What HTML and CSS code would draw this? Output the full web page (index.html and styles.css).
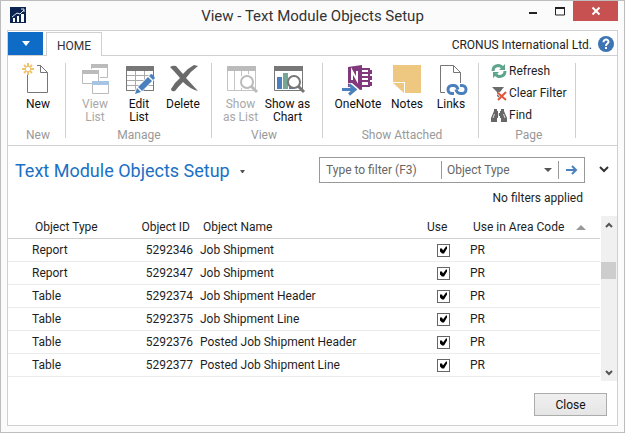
FILE: index.html
```html
<!DOCTYPE html>
<html lang="en">
<head>
<meta charset="utf-8">
<title>View - Text Module Objects Setup</title>
<link rel="stylesheet" href="styles.css">
</head>
<body>
<div class="window">
  <header class="titlebar">
    <svg class="app-icon" width="16" height="16" viewBox="0 0 16 16" aria-hidden="true"><rect width="16" height="16" fill="#0a2350"/><path d="M3 11h2v4H3zM7 9h2v6H7zM11 7h3v8h-3z" fill="#fff"/><path d="M2 10l5-4 3 1 4-4M11 2h3v3" fill="none" stroke="#dfe6f0"/></svg>
    <h1 class="window-title">View - Text Module Objects Setup</h1>
    <div class="window-controls">
      <button class="caption" aria-label="Minimize"><svg width="10" height="10"><rect x="1" y="6" width="8" height="2" fill="#222"/></svg></button>
      <button class="caption" aria-label="Maximize"><svg width="10" height="10"><path d="M.5 1v8h9V1" fill="none" stroke="#222"/><path d="M0 1h10v2H0z" fill="#222"/></svg></button>
      <button class="caption caption-close" aria-label="Close window"><svg width="10" height="10"><path d="M1.500 1.500l7 7M8.500 1.500l-7 7" stroke="#fff" stroke-width="2"/></svg></button>
    </div>
  </header>

  <main class="frame">
    <nav class="tabs">
      <button class="app-menu" aria-label="Application menu"><svg width="8" height="5"><path d="M0 0h8L4 5z" fill="#fff"/></svg></button>
      <a class="tab" href="#home">HOME</a>
      <span class="company">CRONUS International Ltd.</span>
      <button class="help" aria-label="Help"><svg width="16" height="16"><circle cx="8" cy="8" r="8" fill="#3c74b4"/><path d="M5.500 6.200C5.500 2.500 10.800 3 10.500 5.900C10.300 7.600 8 7.700 8 10" fill="none" stroke="#fff" stroke-width="2"/><rect x="7" y="11" width="2" height="2" fill="#fff"/></svg></button>
    </nav>

    <div class="ribbon" id="home">
      <section class="group group-new">
        <div class="tools">
          <button class="tool"><svg width="32" height="32"><path d="M5.500 12v17.500h20V9.500l-7-7H15M18.500 2.500v7h7" fill="none" stroke="#777"/><path d="M6 0v4M6 8v4M0 6h4M8 6h4M2 2l2.500 2.500M7.500 7.500L10 10M10 2L7.500 4.500M4.500 7.500L2 10" stroke="#eec36d" stroke-width="2"/></svg><span>New</span></button>
        </div>
        <h2 class="group-name">New</h2>
      </section>
      <section class="group group-manage">
        <div class="tools">
          <button class="tool" disabled><svg width="32" height="32"><path d="M12.500 6V1.500h16v13H21M3.500 7.500h16v13h-16z" fill="#fff" stroke="#bbb"/><path d="M12 1h17v4H12zM3 7h17v4H3z" fill="#bbb"/><path d="M13.500 18.500h16v12h-16z" fill="#fff" stroke="#bbb"/><path d="M13 18h17v4H13z" fill="#a7c5e2"/></svg><span>View<br>List</span></button>
          <button class="tool"><svg width="32" height="32"><path d="M3.500 6v21.500h27V6M3 12.500h28M3 17.500h28M3 22.500h28M12.500 8v19M21.500 8v19" fill="none" stroke="#aaa"/><path d="M3.500 6v21.500h27V6" fill="none" stroke="#777"/><path d="M3 3h28v5H3z" fill="#777"/><path d="M11 32l2-7 14-14 5 5-14 14z" fill="#fff"/><path d="M12 31l2-6 4 4zM15 24l10-10 4 4-10 10zM26 13l2-2q2 0 4 4l-2 2z" fill="#4a80bd"/></svg><span>Edit<br>List</span></button>
          <button class="tool"><svg width="32" height="32"><path d="M3 4q3-2 6-1l7 8q5-6 11-9l4 1q-7 5-12 12l12 13q-8-2-15-9-5 5-8 9-4 1-4-2 3-6 9-11Q8 9 3 4z" fill="#6b6b6b"/></svg><span>Delete</span></button>
        </div>
        <h2 class="group-name">Manage</h2>
      </section>
      <section class="group group-view">
        <div class="tools">
          <button class="tool tool-wide" disabled><svg width="32" height="32"><path d="M2.500 4v23.500h28V4M9.500 8v19M16.500 8v19M23.500 8v19" fill="none" stroke="#c4c4c4"/><path d="M2 3h29v5H2z" fill="#bbb"/><circle cx="22" cy="19" r="6" fill="#fff" stroke="#fff" stroke-width="4"/><circle cx="22" cy="19" r="6" fill="#fff" stroke="#bbb" stroke-width="2"/><path d="M26 23l6 6" stroke="#bbb" stroke-width="3"/></svg><span>Show<br>as List</span></button>
          <button class="tool tool-wide"><svg width="32" height="32"><path d="M2.500 4v23.500h28V4" fill="none" stroke="#777"/><path d="M2 3h29v5H2z" fill="#777"/><path d="M5 14h5v12H5z" fill="#4a80bd"/><path d="M11 10h5v16h-5z" fill="#74a894"/><path d="M17 14h5v12h-5z" fill="#4a80bd"/><circle cx="22" cy="19" r="6" fill="#fff" stroke="#777" stroke-width="2"/><path d="M26 23l6 6" stroke="#777" stroke-width="3"/></svg><span>Show as<br>Chart</span></button>
        </div>
        <h2 class="group-name">View</h2>
      </section>
      <section class="group group-attached">
        <div class="tools">
          <button class="tool tool-onenote"><svg width="32" height="32"><path d="M20 5h8v19h-8z" fill="#81397b"/><path d="M28 7h2v4h-2zM28 13h2v4h-2zM28 19h2v4h-2z" fill="#81397b"/><path d="M20 7h6v2h-6zM20 11h6v2h-6zM20 15h6v2h-6zM20 19h6v3h-6z" fill="#fff"/><path d="M6 4l14-2v25L6 25z" fill="#81397b"/><path d="M10 17V8l5 9V8" fill="none" stroke="#fff" stroke-width="2"/><path d="M0 24h10l-4-4h4l7 6v5H0z" fill="#fff"/><path d="M0 26.500h13M7 21.500l6 5-6 5" fill="none" stroke="#4a80bd" stroke-width="3"/></svg><span>OneNote</span></button>
          <button class="tool"><svg width="32" height="32"><path d="M2 2h28v28H14V19H2z" fill="#eec880"/><path d="M2 20h11v10z" fill="#eec880"/></svg><span>Notes</span></button>
          <button class="tool"><svg width="32" height="32"><path d="M10 29.500H5.500v-27h13l7 7V20M18.500 2.500v7h7" fill="none" stroke="#777"/><g fill="none" stroke-width="3" stroke="#4a80bd"><path d="M19 30.500h-2a4 4 0 0 1 0-8h2q3 0 4 4"/><path d="M25 22.500h2a4 4 0 0 1 0 8h-2q-3 0-4-4"/></g></svg><span>Links</span></button>
        </div>
        <h2 class="group-name">Show Attached</h2>
      </section>
      <section class="group group-page">
        <div class="tools tools-stacked">
          <button class="mini"><svg width="16" height="16"><path d="M2 8q0-5 5-5.500 3 0 4 2M14 8q0 5-5 5.500-3 0-4-2" fill="none" stroke="#5fa58b" stroke-width="3"/><path d="M14 1v6H8zM2 15V9h6z" fill="#5fa58b"/></svg><span>Refresh</span></button>
          <button class="mini"><svg width="16" height="16"><path d="M1 2h12L9 7v7l-3-3V7z" fill="#6b6b6b"/><path d="M7 8l8 7M15 7l-8 8" stroke="#fff" stroke-width="3"/><path d="M7 8l8 7M15 7l-8 8" stroke="#e2563b" stroke-width="2"/></svg><span>Clear Filter</span></button>
          <button class="mini"><svg width="16" height="16"><path d="M3 2h3v2h1v2h2V4h1V2h3v2l3 7v4h-6v-4H9V9H7v2H6v4H0v-4l3-7z" fill="#666"/><path d="M3.500 7L2 11M12.500 7L14 11M7.500 6v3" stroke="#ddd"/></svg><span>Find</span></button>
        </div>
        <h2 class="group-name">Page</h2>
      </section>
    </div>

    <div class="page-head">
      <button class="page-title">Text Module Objects Setup<svg width="5" height="3"><path d="M0 0h5L3 3H2z" fill="#555"/></svg></button>
      <form class="filter">
        <input class="filter-text" type="text" placeholder="Type to filter (F3)" aria-label="Type to filter">
        <div class="filter-field">
          <select aria-label="Filter field"><option>Object Type</option></select>
          <svg class="field-arrow" width="8" height="4"><path d="M0 0h8L4 4z" fill="#555"/></svg>
        </div>
        <button class="go" type="button" aria-label="Apply filter"><svg width="12" height="10"><path d="M0 5h10M6 1l4 4-4 4" fill="none" stroke="#4a80bd" stroke-width="2"/></svg></button>
      </form>
      <button class="expand" aria-label="Expand filters"><svg width="10" height="7"><path d="M1 1l4 4 4-4" fill="none" stroke="#333" stroke-width="2"/></svg></button>
    </div>
    <p class="filter-state">No filters applied</p>

    <div class="list">
      <table class="grid">
        <colgroup><col class="col-type"><col class="col-id"><col><col class="col-use"><col class="col-area"></colgroup>
        <thead><tr><th>Object Type</th><th class="num">Object ID</th><th>Object Name</th><th>Use</th><th><div class="sorted"><span>Use in Area Code</span><svg width="10" height="5"><path d="M0 5h10L5 0z" fill="#999"/></svg></div></th></tr></thead>
        <tbody>
          <tr><td>Report</td><td class="num">5292346</td><td>Job Shipment</td><td class="use"><input type="checkbox" checked aria-label="Use 5292346"></td><td>PR</td></tr>
          <tr><td>Report</td><td class="num">5292347</td><td>Job Shipment</td><td class="use"><input type="checkbox" checked aria-label="Use 5292347"></td><td>PR</td></tr>
          <tr><td>Table</td><td class="num">5292374</td><td>Job Shipment Header</td><td class="use"><input type="checkbox" checked aria-label="Use 5292374"></td><td>PR</td></tr>
          <tr><td>Table</td><td class="num">5292375</td><td>Job Shipment Line</td><td class="use"><input type="checkbox" checked aria-label="Use 5292375"></td><td>PR</td></tr>
          <tr><td>Table</td><td class="num">5292376</td><td>Posted Job Shipment Header</td><td class="use"><input type="checkbox" checked aria-label="Use 5292376"></td><td>PR</td></tr>
          <tr><td>Table</td><td class="num">5292377</td><td>Posted Job Shipment Line</td><td class="use"><input type="checkbox" checked aria-label="Use 5292377"></td><td>PR</td></tr>
        </tbody>
      </table>
      <div class="scrollbar">
        <button class="scroll-step" aria-label="Scroll up"><svg width="8" height="6"><path d="M1 5l3-3 3 3" fill="none" stroke="#555" stroke-width="2"/></svg></button>
        <div class="track"><div class="thumb"></div></div>
        <button class="scroll-step" aria-label="Scroll down"><svg width="8" height="6"><path d="M1 1l3 3 3-3" fill="none" stroke="#555" stroke-width="2"/></svg></button>
      </div>
    </div>

    <footer class="actions"><button class="close">Close</button></footer>
  </main>
</div>
</body>
</html>
```
FILE: styles.css
```css
* { box-sizing: border-box; }
body {
  margin: 0;
  font: 12px/14px "Segoe UI", Roboto, "Open Sans", sans-serif;
  color: #1e1e1e;
}
button, input, select { font: inherit; color: inherit; margin: 0; }
button { padding: 0; border: 0; background: none; }
svg { display: block; flex: none; overflow: visible; }
h1, h2, p { margin: 0; font-weight: 400; }

.window {
  display: flex;
  flex-direction: column;
  min-height: 100vh;
  padding: 0 6px 6px;
  border: 1px solid #bdbdbd;
  background: #fbfbfb;
}
.titlebar { display: grid; grid-template-columns: 1fr auto 1fr; height: 29px; }
.app-icon { margin: 6px 0 0 3px; }
.window-title { font-size: 15px; line-height: 30px; color: #333; }
.window-controls { display: flex; justify-content: flex-end; height: 20px; }
.caption { display: grid; place-items: center; width: 27px; }
.caption-close { width: 45px; background: #c75050; }

.frame {
  flex: 1;
  display: flex;
  flex-direction: column;
  border: 1px solid #d0d0d0;
  background: #fff;
}
.tabs { display: flex; align-items: center; height: 25px; padding-right: 3px; border-bottom: 1px solid #d0d0d0; }
.app-menu { display: grid; place-items: center; align-self: flex-end; width: 35px; height: 23px; background: #0f6cc6; }
.tab {
  align-self: flex-end;
  height: 24px;
  margin: 0 auto -1px 3px;
  padding: 0 10px;
  border: 1px solid #d0d0d0;
  border-bottom: 0;
  background: #fff;
  line-height: 26px;
  color: #333;
  text-decoration: none;
}
.company { margin: 4px 6px 0 0; }
.help { margin-top: 2px; }

.ribbon { display: flex; padding: 7px 0; border-bottom: 1px solid #d0d0d0; }
.group { display: flex; flex-direction: column; height: 75px; border-right: 1px solid #d0d0d0; }
.group-new { padding: 0 5px 0 8px; }
.group-manage { padding: 0 6px 0 7px; }
.group-view { padding: 0 11px 0 5px; }
.group-attached { padding: 0 5px 0 8px; }
.group-page { padding: 0 8px 0 12px; min-width: 96px; }
.tools { display: flex; height: 65px; flex: none; }
.tool { display: flex; flex-direction: column; align-items: center; gap: 3px; width: 44px; white-space: nowrap; line-height: 13px; color: #111; }
.tool-wide { width: 47px; }
.tool-onenote { width: 54px; }
.tool:disabled { color: #a8a8a8; }
.tools-stacked { flex-direction: column; gap: 6px; }
.mini { display: flex; align-items: center; gap: 2px; height: 16px; white-space: nowrap; }
.group-name { font-size: 12px; line-height: 14px; color: #999; text-align: center; }

.page-head { display: flex; align-items: center; padding: 10px 8px 0 7px; }
.page-title { display: flex; align-items: center; gap: 10px; margin-right: auto; padding-top: 3px; font-size: 18px; line-height: 24px; color: #1a70c4; white-space: nowrap; }
.filter { display: flex; align-items: center; width: 266px; height: 26px; border: 1px solid #999; color: #666; }
.filter-text { flex: 1; min-width: 0; padding: 0 6px; border: 0; outline: 0; background: none; }
.filter-text::placeholder { color: #666; opacity: 1; }
.filter-field { position: relative; width: 118px; height: 18px; border: 1px solid #999; border-width: 0 1px; }
.filter-field select { width: 100%; height: 18px; padding: 0 5px; border: 0; background: none; appearance: none; }
.field-arrow { position: absolute; right: 6px; top: 7px; pointer-events: none; }
.go { display: grid; place-items: center; width: 25px; height: 24px; }
.expand { margin-left: 14px; }
.filter-state { padding: 8px 34px 0 0; text-align: right; }

.list { display: flex; gap: 1px; margin-top: 11px; height: 165px; }
.grid { flex: 1; align-self: flex-start; border-collapse: separate; border-spacing: 0; table-layout: fixed; white-space: nowrap; }
.col-type { width: 120px; }
.col-id { width: 68px; }
.col-use { width: 44px; }
.col-area { width: 134px; }
th, td { height: 23px; padding: 0 4px; text-align: left; font-weight: 400; border-bottom: 1px solid #ebebeb; }
th { padding: 0 7px; border-bottom-color: #d0d0d0; }
th:first-child { padding-left: 27px; }
td:first-child { padding-left: 24px; }
.num { text-align: right; }
th.num { padding-right: 6px; }
td.num { padding-right: 3px; }
.use { padding-left: 15px; }
.sorted { display: flex; align-items: center; justify-content: space-between; padding-right: 7px; }
th:nth-child(4) { padding-left: 5px; }
input[type="checkbox"] { display: block; width: 13px; height: 13px; border: 1px solid #666; background: #fff; appearance: none; }
input[type="checkbox"]:checked::before {
  content: "";
  display: block;
  height: 11px;
  background: #000;
  clip-path: polygon(2px 4px, 4px 4px, 5px 6px, 8px 2px, 9px 2px, 9px 4px, 6px 9px, 4px 9px, 2px 7px);
}
.scrollbar { display: flex; flex-direction: column; width: 16px; background: #f0f0f0; }
.scroll-step { display: grid; place-items: center; height: 17px; }
.track { flex: 1; padding-top: 29px; }
.thumb { width: 15px; height: 17px; background: #cdcdcd; }

.actions { display: flex; justify-content: flex-end; padding: 11px 10px 9px; margin-top: auto; }
.close { width: 73px; height: 23px; border: 1px solid #acacac; background: linear-gradient(#f0f0f0, #e5e5e5); color: #111; }
```
